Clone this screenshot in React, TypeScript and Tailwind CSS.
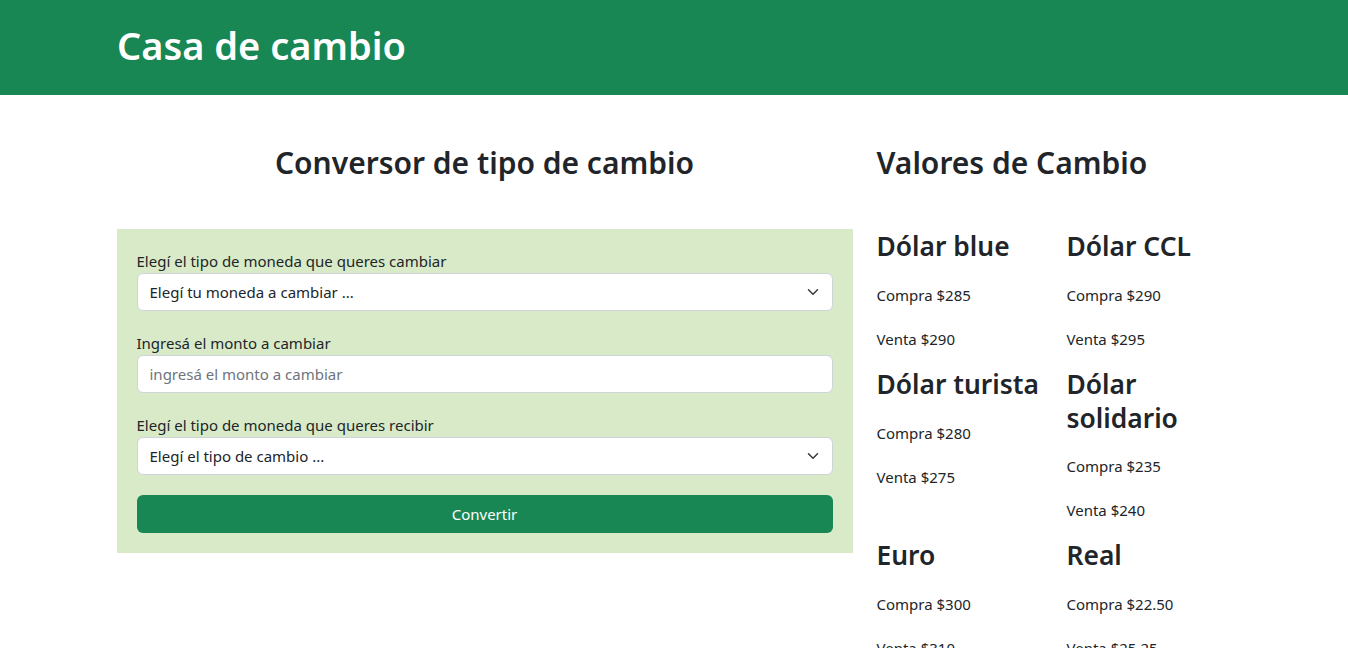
import { useState } from "react";

const valores = [
  { nombre: "Dólar blue", compra: "$285", venta: "$290" },
  { nombre: "Dólar CCL", compra: "$290", venta: "$295" },
  { nombre: "Dólar turista", compra: "$280", venta: "$275" },
  { nombre: "Dólar solidario", compra: "$235", venta: "$240" },
  { nombre: "Euro", compra: "$300", venta: "$310" },
  { nombre: "Real", compra: "$22.50", venta: "$25.25" },
];

function Chevron() {
  return (
    <svg
      className="pointer-events-none absolute right-3 top-1/2 h-3 w-4 -translate-y-1/2"
      viewBox="0 0 16 16"
      fill="none"
      stroke="#343a40"
      strokeWidth="2"
      strokeLinecap="round"
      strokeLinejoin="round"
    >
      <path d="m2 5 6 6 6-6" />
    </svg>
  );
}

export default function App() {
  const [monto, setMonto] = useState("");

  return (
    <main className="min-h-screen bg-white text-[#212529] [font-family:'Noto_Sans',sans-serif]">
      {/* Header */}
      <header className="h-[95px] bg-[#198754]">
        <div className="mx-auto max-w-[1140px] pl-[13px] pr-[11px] pt-[21px]">
          <h1 className="text-[38px] font-semibold leading-[48px] text-white">Casa de cambio</h1>
        </div>
      </header>

      <div className="mx-auto flex max-w-[1141px] pl-[1px] pt-[49px]">
        {/* Conversor */}
        <section className="w-[760px] shrink-0 px-3">
          <h2 className="mb-[47px] text-center text-[30px] font-semibold leading-[38.4px]">
            Conversor de tipo de cambio
          </h2>

          <form className="flex flex-col gap-5 bg-[#d9eac8] p-5" onSubmit={(e) => e.preventDefault()}>
            <div>
              <label className="block text-[15px] leading-6">Elegí el tipo de moneda que queres cambiar</label>
              <div className="relative">
                <select className="h-[38px] w-full appearance-none rounded-md border border-[#ced4da] bg-white pl-3 pr-9 text-[15px] text-[#212529] outline-none">
                  <option>Elegí tu moneda a cambiar ...</option>
                  <option>Peso argentino</option>
                  <option>Dólar</option>
                </select>
                <Chevron />
              </div>
            </div>

            <div>
              <label className="block text-[15px] leading-6">Ingresá el monto a cambiar</label>
              <input
                type="number"
                value={monto}
                onChange={(e) => setMonto(e.target.value)}
                placeholder="ingresá el monto a cambiar"
                className="h-[38px] w-full rounded-md border border-[#ced4da] bg-white px-3 text-[15px] outline-none placeholder:text-[#6c757d]"
              />
            </div>

            <div>
              <label className="block text-[15px] leading-6">Elegí el tipo de moneda que queres recibir</label>
              <div className="relative">
                <select className="h-[38px] w-full appearance-none rounded-md border border-[#ced4da] bg-white pl-3 pr-9 text-[15px] text-[#212529] outline-none">
                  <option>Elegí el tipo de cambio ...</option>
                  <option>Dólar blue</option>
                  <option>Euro</option>
                </select>
                <Chevron />
              </div>
            </div>

            <button className="h-[38px] w-full rounded-md bg-[#198754] text-[15px] text-white">Convertir</button>
          </form>
        </section>

        {/* Valores */}
        <section className="w-[380px] shrink-0 px-3">
          <h2 className="mb-[47px] text-[30px] font-semibold leading-[38.4px]">Valores de Cambio</h2>

          <div className="-mx-3 grid grid-cols-2">
            {valores.map((v) => (
              <div key={v.nombre} className="px-3 pb-[16px]">
                <h3 className="mb-[19px] pt-[1px] text-[26.4px] font-semibold leading-[33.6px]">{v.nombre}</h3>
                <p className="text-[15px] leading-6">Compra {v.compra}</p>
                <p className="mt-5 text-[15px] leading-6">Venta {v.venta}</p>
              </div>
            ))}
          </div>
        </section>
      </div>
    </main>
  );
}
